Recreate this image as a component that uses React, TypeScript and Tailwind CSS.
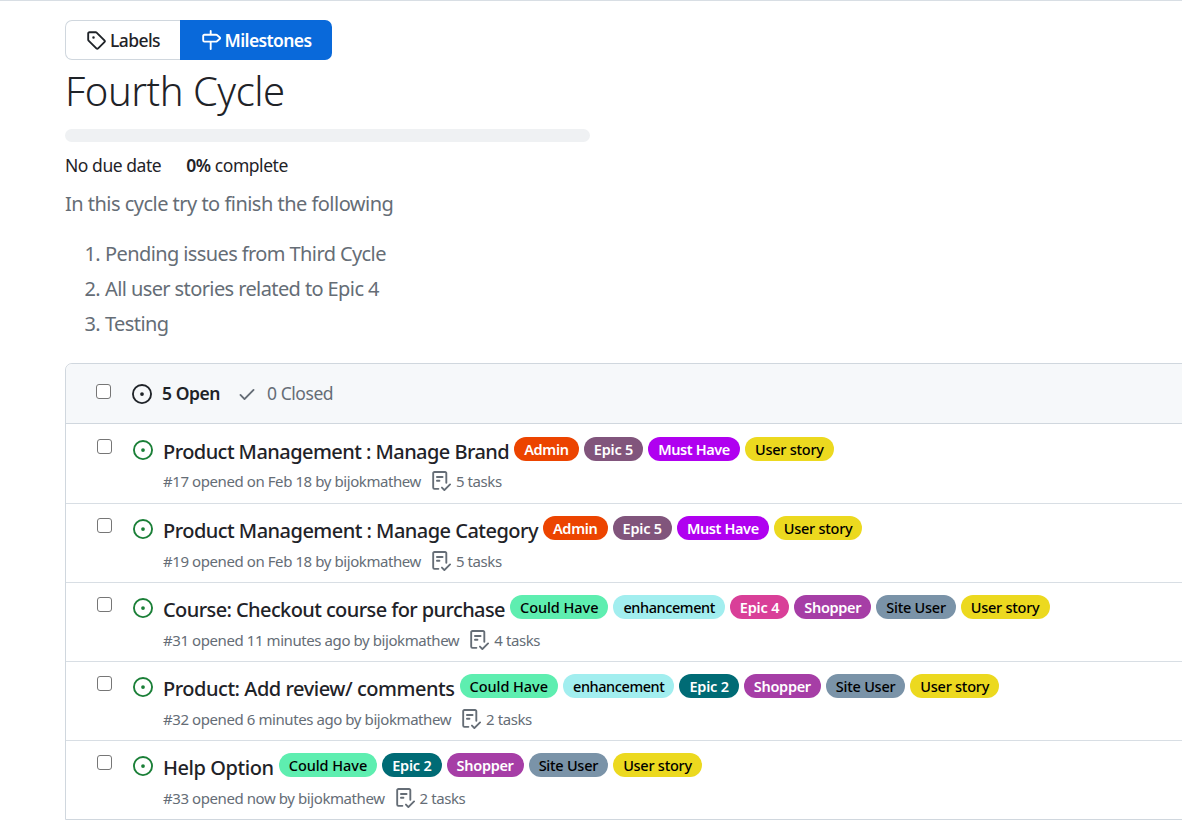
const P = {
  issue: "M8 9.5a1.5 1.5 0 1 0 0-3 1.5 1.5 0 0 0 0 3Z M8 0a8 8 0 1 1 0 16A8 8 0 0 1 8 0ZM1.5 8a6.5 6.5 0 1 0 13 0 6.5 6.5 0 0 0-13 0Z",
  tag: "M1 7.775V2.75C1 1.784 1.784 1 2.75 1h5.025c.464 0 .91.184 1.238.513l6.25 6.25a1.75 1.75 0 0 1 0 2.474l-5.026 5.026a1.75 1.75 0 0 1-2.474 0l-6.25-6.25A1.752 1.752 0 0 1 1 7.775Zm1.5 0c0 .066.026.13.073.177l6.25 6.25a.25.25 0 0 0 .354 0l5.025-5.025a.25.25 0 0 0 0-.354l-6.25-6.25a.25.25 0 0 0-.177-.073H2.75a.25.25 0 0 0-.25.25ZM6 5a1 1 0 1 1 0 2 1 1 0 0 1 0-2Z",
  milestone: "M7.75 0a.75.75 0 0 1 .75.75V3h3.634c.414 0 .814.147 1.13.414l2.07 1.75a1.75 1.75 0 0 1 0 2.672l-2.07 1.75a1.75 1.75 0 0 1-1.13.414H8.5v5.25a.75.75 0 0 1-1.5 0V10H2.75A1.75 1.75 0 0 1 1 8.25v-3.5C1 3.784 1.784 3 2.75 3H7V.75A.75.75 0 0 1 7.75 0Zm4.384 8.5a.25.25 0 0 0 .161-.06l2.07-1.75a.248.248 0 0 0 0-.38l-2.07-1.75a.25.25 0 0 0-.161-.06H2.75a.25.25 0 0 0-.25.25v3.5c0 .138.112.25.25.25h9.384Z",
  check: "M13.78 4.22a.75.75 0 0 1 0 1.06l-7.25 7.25a.75.75 0 0 1-1.06 0L2.22 9.28a.751.751 0 0 1 .018-1.042.751.751 0 0 1 1.042-.018L6 10.94l6.72-6.72a.75.75 0 0 1 1.06 0Z",
  checklist: "M2.5 1.75v11.5c0 .138.112.25.25.25h3.17a.75.75 0 0 1 0 1.5H2.75A1.75 1.75 0 0 1 1 13.25V1.75C1 .784 1.784 0 2.75 0h8.5C12.216 0 13 .784 13 1.75v7.736a.75.75 0 0 1-1.5 0V1.75a.25.25 0 0 0-.25-.25h-8.5a.25.25 0 0 0-.25.25Zm13.274 9.537v-.001l-4.557 4.45a.75.75 0 0 1-1.055-.008l-1.943-1.95a.75.75 0 0 1 1.062-1.058l1.419 1.425 4.026-3.932a.75.75 0 1 1 1.048 1.074ZM4.75 4h4.5a.75.75 0 0 1 0 1.5h-4.5a.75.75 0 0 1 0-1.5ZM4 7.75A.75.75 0 0 1 4.75 7h2a.75.75 0 0 1 0 1.5h-2A.75.75 0 0 1 4 7.75Z",
};

function Oct({ d, size, className }: { d: string; size: number; className?: string }) {
  return (
    <svg width={size} height={size} viewBox="0 0 16 16" fill="currentColor" className={className}>
      <path d={d} fillRule="evenodd" />
    </svg>
  );
}

const Box = ({ className = "" }: { className?: string }) => (
  <span className={`block w-[15px] h-[15px] shrink-0 rounded-[3px] border border-[#767676] bg-white ${className}`} />
);

const L: Record<string, string> = {
  Admin: "bg-[#ec4400] text-white font-semibold tracking-[-0.3px]",
  "Epic 5": "bg-[#81557c] text-white font-semibold tracking-[-0.2px]",
  "Must Have": "bg-[#b000f0] text-white font-semibold tracking-[-0.4px]",
  "User story": "bg-[#ecd91f] text-black font-medium tracking-[-0.25px]",
  "Could Have": "bg-[#5eeeb0] text-black font-medium tracking-[-0.05px]",
  enhancement: "bg-[#a2eeef] text-black font-medium tracking-[-0.42px]",
  "Epic 4": "bg-[#d93f98] text-white font-semibold tracking-[-0.2px]",
  "Epic 2": "bg-[#006b75] text-white font-semibold tracking-[-0.2px]",
  Shopper: "bg-[#a63ea6] text-white font-semibold tracking-[-0.3px]",
  "Site User": "bg-[#7a93a8] text-black font-medium tracking-[-0.25px]",
};

const first = { box: "mt-[15px]", icon: "mt-[16px]", body: "pt-[14px]", meta: "mt-[5px]" };
const rest = { box: "mt-[14px]", icon: "mt-[15px]", body: "pt-[13px]", meta: "mt-[6px]" };

const rows = [
  { p: first, h: "h-[80px] border-b", tr: "tracking-[-0.56px]", t: "Product Management : Manage Brand", m: "#17 opened on Feb 18 by bijokmathew", n: 5, l: ["Admin", "Epic 5", "Must Have", "User story"] },
  { p: rest, h: "h-[79px] border-b", tr: "tracking-[-0.53px]", t: "Product Management : Manage Category", m: "#19 opened on Feb 18 by bijokmathew", n: 5, l: ["Admin", "Epic 5", "Must Have", "User story"] },
  { p: rest, h: "h-[79px] border-b", tr: "tracking-[-0.6px]", t: "Course: Checkout course for purchase", m: "#31 opened 11 minutes ago by bijokmathew", n: 4, l: ["Could Have", "enhancement", "Epic 4", "Shopper", "Site User", "User story"] },
  { p: rest, h: "h-[79px] border-b", tr: "tracking-[-0.47px]", t: "Product: Add review/ comments", m: "#32 opened 6 minutes ago by bijokmathew", n: 2, l: ["Could Have", "enhancement", "Epic 2", "Shopper", "Site User", "User story"] },
  { p: rest, h: "h-[78px]", tr: "tracking-[-0.42px]", t: "Help Option", m: "#33 opened now by bijokmathew", n: 2, l: ["Could Have", "Epic 2", "Shopper", "Site User", "User story"] },
];

export default function App() {
  return (
    <div className="w-[1182px] h-[830px] overflow-hidden bg-white border-t border-[#d8dee4] pl-[65px] pt-[19px] font-['Noto_Sans',sans-serif] text-[#1f2328]">
      <div className="flex h-[40px] w-[267px] text-[17.5px] font-medium">
        <div className="w-[115px] flex items-center justify-center gap-[4px] border border-r-0 border-[#d0d7de] rounded-l-[7px]">
          <Oct d={P.tag} size={20} />
          <span className="tracking-[-0.6px]">Labels</span>
        </div>
        <div className="flex-1 flex items-center justify-center gap-[4px] bg-[#0969da] text-white rounded-r-[7px]">
          <Oct d={P.milestone} size={20} />
          <span className="font-semibold tracking-[-0.6px]">Milestones</span>
        </div>
      </div>

      <h1 className="mt-[3px] h-[56px] text-[40px] leading-[56px] tracking-[-0.48px] font-light">Fourth Cycle</h1>

      <div className="mt-[10px] w-[525px] h-[13px] rounded-full bg-[#eff1f3]" />

      <div className="mt-[11px] flex text-[17.5px] leading-[24px] tracking-[-0.45px]">
        <span>No due date</span>
        <span className="ml-[25px]"><span className="font-semibold">0%</span> complete</span>
      </div>

      <p className="mt-[14px] text-[20px] leading-[26px] tracking-[-0.52px] text-[#656d76]">In this cycle try to finish the following</p>

      <ol className="mt-[24px] text-[20px] leading-[26px] tracking-[-0.6px] text-[#656d76] flex flex-col gap-[9px]">
        {["Pending issues from Third Cycle", "All user stories related to Epic 4", "Testing"].map((s, i) => (
          <li key={s} className="flex">
            <span className="w-[40px] text-right pr-[5px]">{i + 1}.</span>
            <span>{s}</span>
          </li>
        ))}
      </ol>

      <div className="mt-[26px] w-[1300px] border border-[#d0d7de] rounded-tl-[7px]">
        <div className="h-[60px] flex items-center bg-[#f6f8fa] rounded-tl-[7px] border-b border-[#d0d7de]">
          <Box className="ml-[30px] -mt-[4px]" />
          <Oct d={P.issue} size={20} className="ml-[21px]" />
          <span className="ml-[10px] text-[17.5px] font-semibold tracking-[-0.45px]">5 Open</span>
          <Oct d={P.check} size={20} className="ml-[17px] text-[#656d76]" />
          <span className="ml-[10px] text-[17.5px] tracking-[-0.45px] text-[#656d76]">0 Closed</span>
        </div>
        {rows.map((r) => (
          <div key={r.m} className={`${r.h} flex border-[#d8dee4]`}>
            <Box className={`ml-[31px] ${r.p.box}`} />
            <Oct d={P.issue} size={20} className={`ml-[21px] text-[#1a7f37] ${r.p.icon}`} />
            <div className={`ml-[10px] ${r.p.body}`}>
              <div className="flex items-start">
                <span className={`text-[20px] leading-[28px] font-medium whitespace-nowrap ${r.tr}`}>{r.t}</span>
                <span className="flex gap-[5px] ml-[5px] -mt-[1px]">
                  {r.l.map((x) => (
                    <span key={x} className={`h-[24px] px-[10px] rounded-full text-[14.5px] leading-[24px] whitespace-nowrap ${L[x]}`}>{x}</span>
                  ))}
                </span>
              </div>
              <div className={`${r.p.meta} flex items-center text-[15px] leading-[20px] tracking-[-0.42px] text-[#656d76]`}>
                <span>{r.m}</span>
                <Oct d={P.checklist} size={20} className="ml-[10px] mr-[5px]" />
                <span>{r.n} tasks</span>
              </div>
            </div>
          </div>
        ))}
      </div>
    </div>
  );
}
